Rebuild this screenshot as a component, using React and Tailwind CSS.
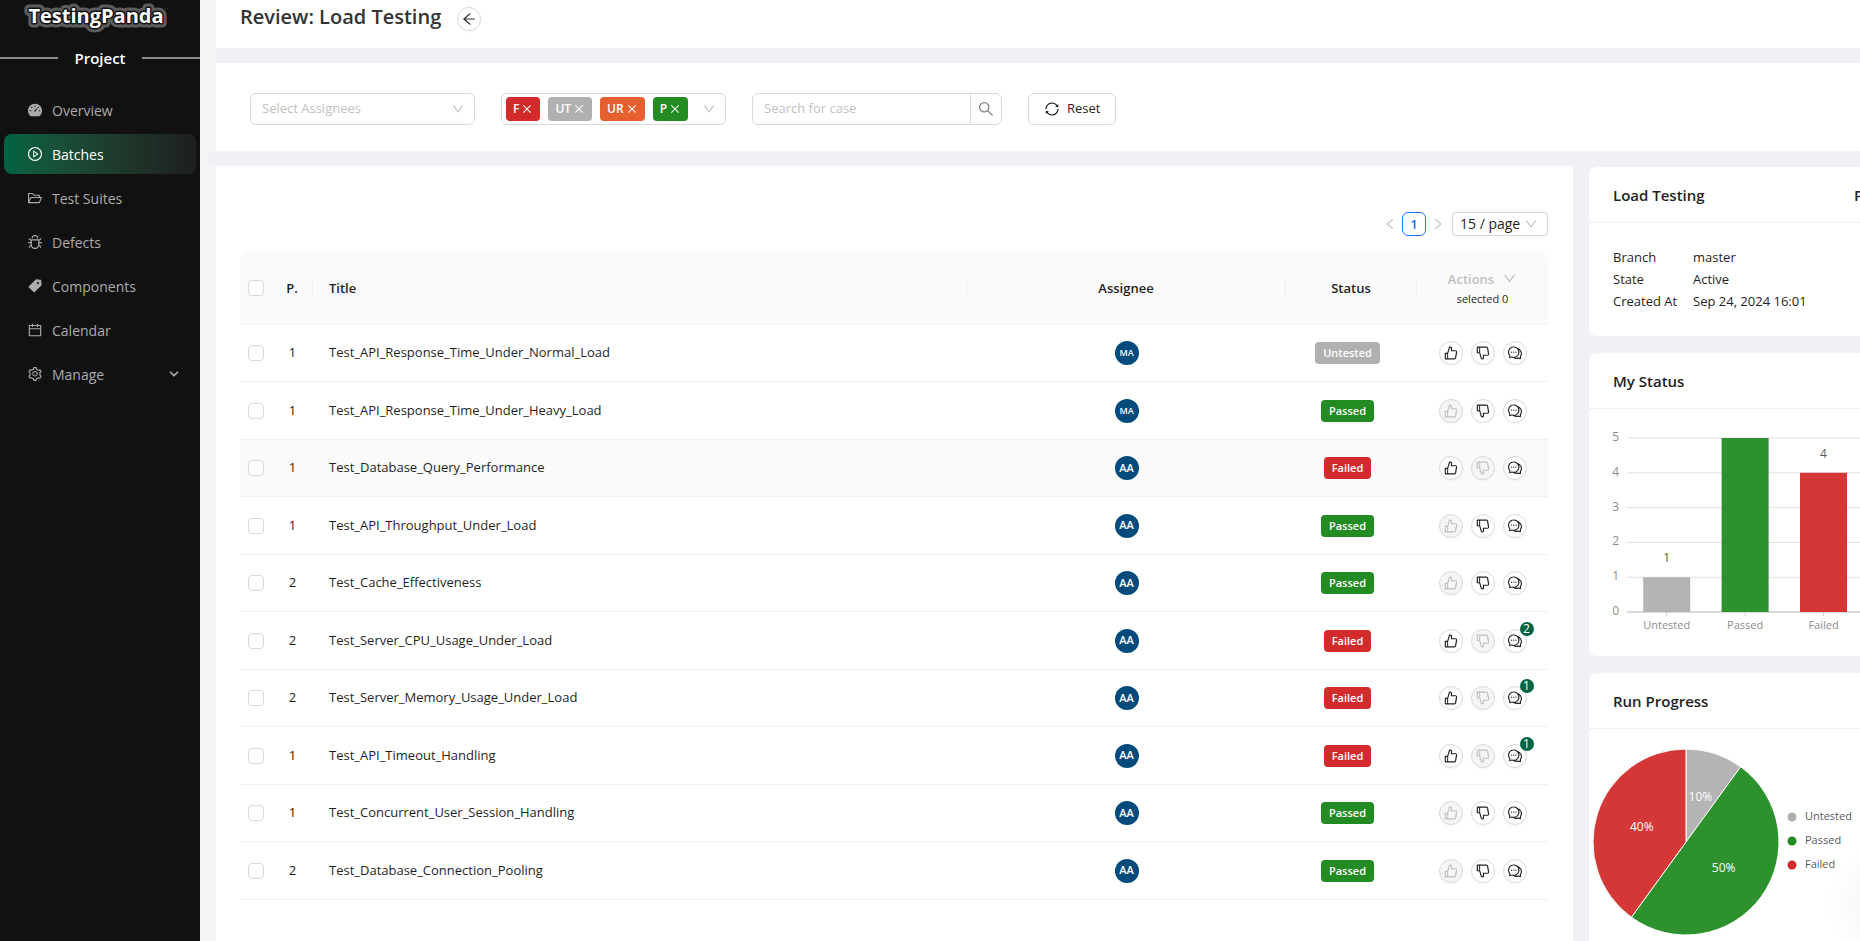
import React from 'react';
import {
    AiFillDashboard,
    AiFillTag,
    AiOutlineArrowLeft,
    AiOutlineBug,
    AiOutlineCalendar,
    AiOutlineClose,
    AiOutlineComment,
    AiOutlineDislike,
    AiOutlineDown,
    AiOutlineFolderOpen,
    AiOutlineLeft,
    AiOutlineLike,
    AiOutlinePlayCircle,
    AiOutlineRight,
    AiOutlineSearch,
    AiOutlineSetting,
    AiOutlineSync,
} from 'react-icons/ai';
import { FiChevronDown } from 'react-icons/fi';
import clsx from 'clsx';

const menuItems = [
    { label: 'Overview', icon: AiFillDashboard },
    { label: 'Batches', icon: AiOutlinePlayCircle, active: true },
    { label: 'Test Suites', icon: AiOutlineFolderOpen },
    { label: 'Defects', icon: AiOutlineBug },
    { label: 'Components', icon: AiFillTag },
    { label: 'Calendar', icon: AiOutlineCalendar },
    { label: 'Manage', icon: AiOutlineSetting, expandable: true },
];

const statusFilters = [
    { label: 'F', className: 'bg-[#d32b2b]' },
    { label: 'UT', className: 'bg-[#b0b0b0]' },
    { label: 'UR', className: 'bg-[#e6602f]' },
    { label: 'P', className: 'bg-[#228b22]' },
];

const statusColors = {
    Untested: 'bg-[#b0b0b0]',
    Passed: 'bg-[#228b22]',
    Failed: 'bg-[#d32b2b]',
};

const cases = [
    { priority: 1, title: 'Test_API_Response_Time_Under_Normal_Load', assignee: 'MA', status: 'Untested' },
    { priority: 1, title: 'Test_API_Response_Time_Under_Heavy_Load', assignee: 'MA', status: 'Passed' },
    { priority: 1, title: 'Test_Database_Query_Performance', assignee: 'AA', status: 'Failed', highlighted: true },
    { priority: 1, title: 'Test_API_Throughput_Under_Load', assignee: 'AA', status: 'Passed' },
    { priority: 2, title: 'Test_Cache_Effectiveness', assignee: 'AA', status: 'Passed' },
    { priority: 2, title: 'Test_Server_CPU_Usage_Under_Load', assignee: 'AA', status: 'Failed', comments: 2 },
    { priority: 2, title: 'Test_Server_Memory_Usage_Under_Load', assignee: 'AA', status: 'Failed', comments: 1 },
    { priority: 1, title: 'Test_API_Timeout_Handling', assignee: 'AA', status: 'Failed', comments: 1 },
    { priority: 1, title: 'Test_Concurrent_User_Session_Handling', assignee: 'AA', status: 'Passed' },
    { priority: 2, title: 'Test_Database_Connection_Pooling', assignee: 'AA', status: 'Passed' },
];

const batchInfo = [
    ['Branch', 'master'],
    ['State', 'Active'],
    ['Created At', 'Sep 24, 2024 16:01'],
];

const chartData = [
    { label: 'Untested', value: 1, color: '#b0b0b0' },
    { label: 'Passed', value: 5, color: '#228b22' },
    { label: 'Failed', value: 4, color: '#d32b2b' },
];

const Logo = () => (
    <svg className="block h-9 w-full" viewBox="0 0 200 36" aria-label="TestingPanda">
        <g
            fontFamily="'Open Sans', sans-serif"
            fontSize="20"
            fontWeight="700"
            textAnchor="middle"
            strokeLinejoin="round"
        >
            <text x="96" y="23" fill="#5c5c5c" stroke="#5c5c5c" strokeWidth="9" aria-hidden="true">TestingPanda</text>
            <text x="96" y="23" fill="#ffffff" stroke="#111111" strokeWidth="3" paintOrder="stroke">TestingPanda</text>
        </g>
    </svg>
);

const Sidebar = () => (
    <aside className="w-[200px] shrink-0 bg-[#111111]">
        <Logo />
        <div className="flex h-11 items-center gap-4 text-[15px] font-semibold text-white">
            <span className="h-[2px] flex-1 bg-[#8c8c8c]" />
            Project
            <span className="h-[2px] flex-1 bg-[#8c8c8c]" />
        </div>
        <nav className="mt-[10px] flex flex-col gap-1 px-1">
            {menuItems.map(({ label, icon: Icon, active, expandable }) => (
                <a
                    key={label}
                    href="#"
                    className={clsx(
                        'flex h-10 items-center gap-[9px] rounded-lg px-[23px] text-sm',
                        active ? 'bg-linear-to-r from-[#006442] to-[#1d1f1e] text-white' : 'text-[#acacac]'
                    )}
                >
                    <Icon className="size-4 shrink-0" />
                    <span className="flex-1 pt-[2px]">{label}</span>
                    {expandable && <FiChevronDown className="-mr-2 size-[14px]" strokeWidth={3} />}
                </a>
            ))}
        </nav>
    </aside>
);

const Filters = () => (
    <section className="flex h-[88px] shrink-0 items-center bg-white px-[34px] pt-1">
        <div className="relative w-[225px]">
            <select
                aria-label="Select Assignees"
                className="h-8 w-full appearance-none rounded-md border border-[#d9d9d9] bg-white px-[11px] text-[13px] text-[#bfbfbf]"
            >
                <option>Select Assignees</option>
            </select>
            <AiOutlineDown className="pointer-events-none absolute top-[9px] right-[10px] size-[14px] text-[#bfbfbf]" />
        </div>

        <div className="ml-[26px] flex h-8 w-[225px] items-center gap-2 rounded-md border border-[#d9d9d9] px-1">
            {statusFilters.map(({ label, className }) => (
                <button
                    key={label}
                    type="button"
                    className={clsx(
                        'flex h-6 items-center gap-[2px] rounded px-[7px] text-xs font-semibold text-white',
                        className
                    )}
                >
                    {label}
                    <AiOutlineClose className="size-3" />
                </button>
            ))}
            <AiOutlineDown className="mr-[5px] ml-auto size-[14px] text-[#bfbfbf]" />
        </div>

        <div className="ml-[26px] flex h-8 w-[250px] rounded-md border border-[#d9d9d9]">
            <input
                type="text"
                aria-label="Search for case"
                placeholder="Search for case"
                className="min-w-0 flex-1 px-[11px] text-[13px] outline-none placeholder:text-[#bfbfbf]"
            />
            <button
                type="button"
                aria-label="Search"
                className="flex w-[31px] items-center justify-center border-l border-[#d9d9d9] text-[#8c8c8c]"
            >
                <AiOutlineSearch className="size-[18px]" />
            </button>
        </div>

        <button
            type="button"
            className="ml-[26px] flex h-8 items-center gap-[7px] rounded-md border border-[#d9d9d9] px-[15px] text-[13px] text-[#1f1f1f] shadow-[0_2px_0_rgba(0,0,0,0.02)]"
        >
            <AiOutlineSync className="size-4" />
            Reset
        </button>
    </section>
);

const Pagination = () => (
    <div className="flex h-6 items-center justify-end text-sm text-[#1f1f1f]">
        <button type="button" aria-label="Previous page" className="flex size-6 items-center justify-center text-[#bfbfbf]">
            <AiOutlineLeft className="size-[14px]" />
        </button>
        <button type="button" className="size-6 rounded-md border border-[#1677ff] text-[13px] leading-5 font-semibold text-[#1677ff]">
            1
        </button>
        <button type="button" aria-label="Next page" className="flex size-6 items-center justify-center text-[#bfbfbf]">
            <AiOutlineRight className="size-[14px]" />
        </button>
        <div className="relative ml-[2px] w-24">
            <select
                aria-label="Page size"
                className="h-6 w-full appearance-none rounded border border-[#d9d9d9] bg-white px-[7px] text-sm leading-5"
            >
                <option>15 / page</option>
            </select>
            <AiOutlineDown className="pointer-events-none absolute top-[5px] right-[10px] size-[14px] text-[#bfbfbf]" />
        </div>
    </div>
);

const RowCheckbox = ({ label }) => (
    <input
        type="checkbox"
        aria-label={label}
        className="block size-4 appearance-none rounded border border-[#d9d9d9] bg-white"
    />
);

const RoundButton = ({ label, icon: Icon, disabled, badge }) => (
    <button
        type="button"
        aria-label={label}
        disabled={disabled}
        className={clsx(
            'relative flex size-6 items-center justify-center rounded-full border border-[#d9d9d9] shadow-[0_2px_0_rgba(0,0,0,0.02)]',
            disabled ? 'bg-[#f5f5f5] text-[#bfbfbf]' : 'bg-white text-[#1f1f1f]'
        )}
    >
        <Icon className="size-4" />
        {badge && (
            <span className="absolute -top-2 -right-2 size-[14px] rounded-full bg-[#006442] text-center text-xs leading-[14px] font-medium text-white">
                {badge}
            </span>
        )}
    </button>
);

// Table header cell with the short divider at its right edge
const HeadCell = ({ children, className }) => (
    <th className="p-0 font-semibold">
        <div className={clsx('flex h-[22px] items-center border-r border-[#f0f0f0] px-4 pt-px', className)}>
            {children}
        </div>
    </th>
);

const CasesTable = () => (
    <table className="mt-4 w-full table-fixed border-separate border-spacing-0 text-[13px] text-[#1f1f1f]">
        <colgroup>
            <col className="w-8" />
            <col className="w-[41px]" />
            <col className="w-1/2" />
            <col />
            <col className="w-[131px]" />
            <col className="w-[131px]" />
        </colgroup>
        <thead>
            <tr className="h-[73px] [&>th]:border-b [&>th]:border-[#f0f0f0] [&>th]:bg-[#fafafa]">
                <th className="rounded-tl-lg p-0 pl-2">
                    <RowCheckbox label="Select all" />
                </th>
                <th className="p-0 font-semibold">
                    <div className="flex h-[22px] items-center justify-center border-r border-[#f0f0f0] pt-px">P.</div>
                </th>
                <HeadCell className="justify-start">Title</HeadCell>
                <HeadCell className="justify-center">Assignee</HeadCell>
                <HeadCell className="justify-center">Status</HeadCell>
                <th className="rounded-tr-lg p-0 pt-px font-semibold">
                    <button type="button" disabled className="mx-auto flex items-center gap-2 leading-5 text-[#bfbfbf]">
                        Actions
                        <AiOutlineDown className="size-[15px]" />
                    </button>
                    <div className="text-[11px] leading-5 font-medium">selected 0</div>
                </th>
            </tr>
        </thead>
        <tbody>
            {cases.map((item) => (
                <tr
                    key={item.title}
                    className={clsx(
                        'odd:h-[57px] even:h-[58px] [&>td]:border-b [&>td]:border-[#f0f0f0]',
                        item.highlighted && 'bg-[#fafafa]'
                    )}
                >
                    <td className="p-0 pl-2">
                        <RowCheckbox label={`Select ${item.title}`} />
                    </td>
                    <td className="p-0 text-center">{item.priority}</td>
                    <td className="px-4 py-0">{item.title}</td>
                    <td className="p-0">
                        <div
                            className={clsx(
                                'mx-auto flex size-6 items-center justify-center rounded-full bg-[#004a7c] font-semibold text-white',
                                item.assignee === 'MA' ? 'text-[9px]' : 'text-[11px]'
                            )}
                        >
                            {item.assignee}
                        </div>
                    </td>
                    <td className="p-0 pr-2 text-center">
                        <span
                            className={clsx(
                                'inline-block rounded px-2 text-[11px] leading-[22px] font-semibold text-white',
                                statusColors[item.status]
                            )}
                        >
                            {item.status}
                        </span>
                    </td>
                    <td className="p-0">
                        <div className="flex justify-center gap-2">
                            <RoundButton label="Pass" icon={AiOutlineLike} disabled={item.status === 'Passed'} />
                            <RoundButton label="Fail" icon={AiOutlineDislike} disabled={item.status === 'Failed'} />
                            <RoundButton label="Comments" icon={AiOutlineComment} badge={item.comments} />
                        </div>
                    </td>
                </tr>
            ))}
        </tbody>
    </table>
);

const Card = ({ title, extra, children }) => (
    <section className="rounded-lg bg-white">
        <header className="flex h-14 items-center justify-between border-b border-[#f0f0f0] px-6 pt-[2px] text-[15px] font-semibold text-[#1f1f1f]">
            <h2>{title}</h2>
            {extra && <span className="w-[30px]">{extra}</span>}
        </header>
        {children}
    </section>
);

const StatusChart = () => {
    const baseY = 203;
    const step = 34.8;
    const slot = 78.4;

    return (
        <svg className="block" width="319" height="247" viewBox="0 0 319 247" fontFamily="'Open Sans', sans-serif" fontSize="11">
            {[0, 1, 2, 3, 4, 5].map((tick) => (
                <g key={tick}>
                    <line
                        x1="38"
                        x2="274"
                        y1={baseY - tick * step}
                        y2={baseY - tick * step}
                        stroke={tick === 0 ? '#cccccc' : '#e0e0e0'}
                        strokeWidth={tick === 0 ? 1.5 : 1}
                    />
                    <text x="30" y={baseY - tick * step + 3} fill="#8c8c8c" fontSize="12" textAnchor="end">{tick}</text>
                </g>
            ))}
            {chartData.map(({ label, value, color }, index) => {
                const centerX = 38.5 + slot * (index + 0.5);
                return (
                    <g key={label} textAnchor="middle">
                        <rect
                            x={centerX - 23.5}
                            y={baseY - value * step}
                            width="47"
                            height={value * step}
                            fill={color}
                            fillOpacity="0.95"
                        />
                        <line x1={centerX} x2={centerX} y1={baseY} y2={baseY + 4} stroke="#cccccc" />
                        {value < 5 && (
                            <text x={centerX} y={baseY - value * step - 15} fill="#595959" fontSize="12">{value}</text>
                        )}
                        <text x={centerX} y={baseY + 17} fill="#8c8c8c">{label}</text>
                    </g>
                );
            })}
        </svg>
    );
};

const ProgressChart = () => {
    const cx = 97;
    const cy = 113;
    const r = 93;
    const total = chartData.reduce((sum, { value }) => sum + value, 0);
    const point = (share, radius) => {
        const angle = share * Math.PI * 2;
        return [cx + Math.sin(angle) * radius, cy - Math.cos(angle) * radius];
    };

    let start = 0;
    const slices = chartData.map((item) => {
        const share = item.value / total;
        const slice = {
            ...item,
            share,
            from: point(start, r),
            to: point(start + share, r),
            text: point(start + share / 2, r / 2),
        };
        start += share;
        return slice;
    });

    return (
        <svg className="block" width="319" height="247" viewBox="0 0 319 247" fontFamily="'Open Sans', sans-serif" fontSize="11">
            {slices.map(({ label, color, share, from, to }) => (
                <path
                    key={label}
                    d={`M${cx},${cy} L${from.join(',')} A${r},${r} 0 ${share > 0.5 ? 1 : 0} 1 ${to.join(',')} Z`}
                    fill={color}
                    fillOpacity="0.95"
                    stroke="#ffffff"
                />
            ))}
            {slices.map(({ label, share, text }) => (
                <text key={label} x={text[0]} y={text[1] + 3} fill="#ffffff" fontSize="12" fontWeight="500" textAnchor="middle">
                    {`${Math.round(share * 100)}%`}
                </text>
            ))}
            {chartData.map(({ label, color }, index) => (
                <g key={label}>
                    <circle cx="203" cy={88 + index * 24} r="4.5" fill={color} />
                    <text x="216" y={91 + index * 24} fill="#595959">{label}</text>
                </g>
            ))}
        </svg>
    );
};

const App = () => (
    <div className="relative flex h-screen overflow-hidden bg-[#f5f5f5] font-['Open_Sans',sans-serif]">
        <Sidebar />
        <main className="ml-4 flex min-w-0 flex-1 flex-col">
            <header className="flex h-12 shrink-0 items-start gap-4 bg-white px-6">
                <h1 className="text-xl leading-[34px] font-semibold text-[#333333]">Review: Load Testing</h1>
                <button
                    type="button"
                    aria-label="Back"
                    className="mt-[7px] flex size-6 items-center justify-center rounded-full border border-[#d9d9d9] text-[#333333] shadow-[0_2px_0_rgba(0,0,0,0.02)]"
                >
                    <AiOutlineArrowLeft className="size-4" />
                </button>
            </header>
            <div className="-ml-px h-[15px] shrink-0 bg-[#f0f1f5]" />
            <Filters />
            <div className="-ml-[9px] h-[15px] shrink-0 bg-[#f0f1f5]" />
            <div className="flex flex-1 items-stretch gap-4 bg-[#f0f1f5]">
                <section className="min-w-0 flex-1 bg-white pt-[46px] pr-[25px] pl-6">
                    <Pagination />
                    <CasesTable />
                </section>
                <aside className="-mr-12 flex w-[319px] shrink-0 flex-col gap-[17px] pt-px">
                    <Card title="Load Testing" extra="P">
                        <dl className="grid grid-cols-[80px_1fr] px-6 pt-[23px] pb-6 text-[13px] leading-[22px] text-[#1f1f1f]">
                            {batchInfo.map(([term, value]) => (
                                <React.Fragment key={term}>
                                    <dt>{term}</dt>
                                    <dd>{value}</dd>
                                </React.Fragment>
                            ))}
                        </dl>
                    </Card>
                    <Card title="My Status">
                        <StatusChart />
                    </Card>
                    <Card title="Run Progress">
                        <ProgressChart />
                    </Card>
                </aside>
            </div>
        </main>
        {/* Collapsed help bubble, only its shadow reaches into the page */}
        <div className="absolute -right-[52px] bottom-3 size-12 rounded-full bg-white shadow-[0_0_40px_8px_rgba(0,0,0,0.07)]" />
    </div>
);

export default App;
